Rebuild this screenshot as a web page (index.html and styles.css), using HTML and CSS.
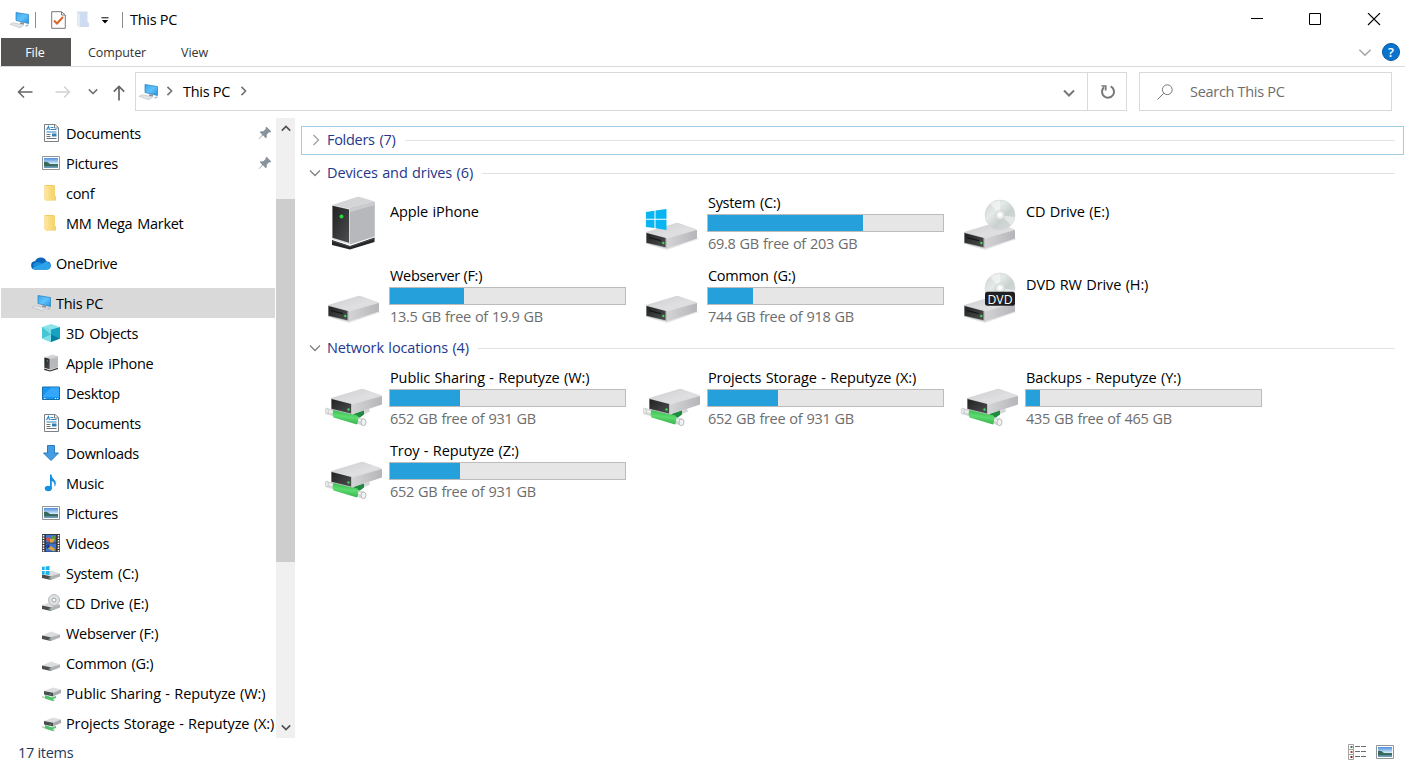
FILE: index.html
```html
<!DOCTYPE html>
<html lang="en">
<head>
<meta charset="utf-8">
<title>This PC</title>
<link rel="stylesheet" href="styles.css">
</head>
<body>
<svg class="defs" aria-hidden="true">
  <defs>
    <linearGradient id="gTop" x1="0" y1="0" x2="1" y2="1"><stop offset="0" stop-color="#cdcdcf"/><stop offset=".6" stop-color="#dfdfe1"/><stop offset="1" stop-color="#dadadc"/></linearGradient>
    <linearGradient id="gSide" x1="0" y1="0" x2="1" y2="0"><stop offset="0" stop-color="#d4d4d7"/><stop offset="1" stop-color="#b6b6ba"/></linearGradient>
    <linearGradient id="gDark" x1="0" y1="0" x2="1" y2="1"><stop offset="0" stop-color="#202222"/><stop offset="1" stop-color="#4c4e4f"/></linearGradient>
    <linearGradient id="gScreen" x1="0" y1="0" x2="1" y2="1"><stop offset="0" stop-color="#3aa5ec"/><stop offset=".5" stop-color="#5fc3fb"/><stop offset="1" stop-color="#2791dc"/></linearGradient>
    <linearGradient id="gDisc" x1="0" y1="0" x2="1" y2="1"><stop offset="0" stop-color="#cfd3d3"/><stop offset=".35" stop-color="#e3eae8"/><stop offset=".6" stop-color="#c9d1cf"/><stop offset="1" stop-color="#dadddd"/></linearGradient>
    <linearGradient id="gGreen" x1=".6" y1="0" x2=".4" y2="1"><stop offset="0" stop-color="#2fae46"/><stop offset=".5" stop-color="#5cdc6e"/><stop offset="1" stop-color="#2fa848"/></linearGradient>
    <linearGradient id="gSky" x1="0" y1="0" x2="0" y2="1"><stop offset="0" stop-color="#4f8fdc"/><stop offset=".55" stop-color="#cfe6f7"/><stop offset=".56" stop-color="#3c6c60"/><stop offset="1" stop-color="#6f9fc0"/></linearGradient>
    <linearGradient id="gFolder" x1="0" y1="0" x2="1" y2="0"><stop offset="0" stop-color="#fbdf8b"/><stop offset="1" stop-color="#f3d068"/></linearGradient>
  </defs>

  <symbol id="drive" viewBox="0 0 58 70">
    <path d="M6 56 24 61 56 50 50 48Z" fill="#d9d9d9" opacity=".6"/>
    <path d="M3 43 33 34Q34 33.700 35.500 34L53 40Q54.500 41 53 42L25 49.500Z" fill="url(#gTop)"/>
    <path d="M24 49.500 54 41V49.500L24 59.500Z" fill="url(#gSide)"/>
    <path d="M3 43 24 49V59.500L3 54.500Z" fill="#bfc0c2"/>
    <path d="M3.500 44 22.500 48.900V58.200L3.500 53.700Z" fill="url(#gDark)"/>
    <path d="M6 48 18 51V52.200L6 49.200Z" fill="#151717"/>
    <circle cx="20.300" cy="54" r="1.200" fill="#3fd45a"/>
  </symbol>

  <symbol id="disc" viewBox="0 0 58 70">
    <circle cx="39" cy="26" r="15" fill="url(#gDisc)" stroke="#d2d5d5" stroke-width=".6"/>
    <path d="M39 26 29 14.500Q34 11 39 11.500ZM39 26 50 36Q53 32 53.500 28Z" fill="#fff" opacity=".45"/>
    <circle cx="39" cy="26" r="4.500" fill="#e8ecec" stroke="#c7cbcb" stroke-width=".7"/>
    <circle cx="39" cy="26" r="2" fill="#fff"/>
  </symbol>

  <symbol id="netdrive" viewBox="0 0 58 70">
    <path d="M36 48 44 44.500 45 47.500 37 51Z" fill="#d3d6d6"/>
    <path d="M28 50 39 46V50.500L33 55Z" fill="#1f8a40"/>
    <path d="M2 44 39.500 55 37.500 61.500 1 50Z" fill="#d4d7d7"/>
    <path d="M2 45.500 39 56.500 38.500 58.500 1.500 47.500Z" fill="#f1f2f2"/>
    <ellipse cx="1.800" cy="47" rx="1.700" ry="3" fill="#e6e8e8" stroke="#bfc2c2" stroke-width=".6"/>
    <path d="M9 45 32.500 51.500Q34.500 54 32 60.500L8.500 53.500Q6.500 49 9 45Z" fill="url(#gGreen)"/>
    <ellipse cx="38.500" cy="58.300" rx="2.500" ry="3.400" fill="#f0f1f1" stroke="#a9adad" stroke-width=".8"/>
    <g transform="translate(3 -9)">
      <path d="M3 43 33 34Q34 33.700 35.500 34L53 40Q54.500 41 53 42L25 49.500Z" fill="url(#gTop)"/>
      <path d="M24 49.500 54 41V49.500L24 59.500Z" fill="url(#gSide)"/>
      <path d="M3 43 24 49V59.500L3 54.500Z" fill="#bfc0c2"/>
      <path d="M3.500 44 23 49V58.500L3.500 53.700Z" fill="url(#gDark)"/>
      <circle cx="20.500" cy="54.500" r="1.200" fill="#3fd45a"/>
    </g>
  </symbol>

  <symbol id="tower" viewBox="0 0 58 70">
    <path d="M7 51 25 57 49.500 48.500V53L25 60.500 7 56Z" fill="#252727"/>
    <path d="M7 52 25 57.700 49.500 49.500" fill="none" stroke="#4c4f50" stroke-width=".8"/>
    <path d="M7 16 31 8.300Q33 7.500 35 8L48 12Q51 13 49 14L26 20Z" fill="#d4d5d7"/>
    <path d="M25 19.500 49.800 13V47.500L25 55.500Z" fill="#b6b8bb"/>
    <path d="M25 19.500 49.800 13V16L25 23Z" fill="#cbcccf"/>
    <path d="M7 15.800 25 20V55.500L7 50Z" fill="#d9dadb"/>
    <path d="M7.500 16.800 24 20.600V53.700L7.500 48.700Z" fill="url(#gDark)"/>
    <circle cx="16.500" cy="27.500" r="2" fill="#28d73a"/>
  </symbol>

  <symbol id="pc" viewBox="0 0 20 18">
    <path d="M6 1.500 18.500 3.500V12.500L6 9.500Z" fill="url(#gScreen)" stroke="#277fbe" stroke-width=".7"/>
    <path d="M11 11 14 11.800V13.800L9.500 12.800Z" fill="#8c9499"/>
    <path d="M0 13.300 3.500 11.700 13.500 14.200 10 16.800Z" fill="#e3e6e8" stroke="#b5bbc0" stroke-width=".6"/>
    <path d="M15.500 15 18.500 14" stroke="#b5bbc0" stroke-width="1.500"/>
  </symbol>
  <symbol id="doc" viewBox="0 0 18 18">
    <path d="M2.500.5H13L16.500 3.500V17.500H2.500Z" fill="#fff" stroke="#7c8083"/>
    <path d="M12.500 .5V4H16" fill="none" stroke="#7c8083"/>
    <path d="M4.500 6 6.500 2.500 7.500 6M8.500 3.500H11.500M8.500 5.500H14.500M4.500 8H14.500" fill="none" stroke="#2b85c5" stroke-width="1.100"/>
    <path d="M4.500 10.500H8.500M4.500 12.500H8.500M4.500 14.500H14.500" stroke="#6b7277"/>
    <path d="M10 9.500H14.500V12.500H10Z" fill="#347fae"/>
  </symbol>
  <symbol id="pic" viewBox="0 0 18 18">
    <path d="M.5 2.500H17.500V15.500H.5Z" fill="#fff" stroke="#8f9496"/>
    <path d="M2 4H16V14H2Z" fill="url(#gSky)"/>
    <path d="M2 8Q5 7 8 10L16 11V12H2Z" fill="#39685d"/>
  </symbol>
  <symbol id="folder" viewBox="0 0 18 18">
    <path d="M2.500 1H10L13 1.500V12L14 12.500V16.500H5L2.500 15Z" fill="#efc95c"/>
    <path d="M2.500 1 6 2.500V14.500L5 17.500 2.500 15.500Z" fill="#fde299"/>
    <path d="M6 2H13V12L14 12.500V16H5.500L6 14Z" fill="url(#gFolder)"/>
  </symbol>
  <symbol id="cloud" viewBox="0 0 20 18">
    <path d="M4.500 15.500A4 4 0 0 1 4 7.300 6.200 6.200 0 0 1 15.500 7.500 4 4 0 0 1 16 15.500Z" fill="#0a64b8"/>
    <path d="M4 15.500 2 10.500Q6 6.500 10 9L16 13 15 15.500Z" fill="#178bd9"/>
    <path d="M4.500 15.500Q2.500 15.500 1.200 14L12.500 9Q15 6.800 17.500 8.400 20 10 19.700 12.500 19 15.500 16 15.500Z" fill="#2aa3e8"/>
  </symbol>
  <symbol id="cube" viewBox="0 0 18 18">
    <path d="M0 3 9 0 18 3 9 5.500Z" fill="#8ce3ea"/>
    <path d="M0 3 9 5.500V18L0 14.500Z" fill="#46c5d5"/>
    <path d="M18 3 9 5.500V18L18 14.500Z" fill="#17a2c2"/>
    <path d="M0 14.500 9 10.500V18ZM0 3 9 5.500 9 10.500Z" fill="#7de0e6"/>
    <path d="M9 10.500 18 14.500 9 18Z" fill="#087da3"/>
  </symbol>
  <symbol id="desk" viewBox="0 0 18 18">
    <path d="M.5 3H17.500V15.500H.5Z" fill="#1695f2" stroke="#176fa6"/>
    <path d="M9 3.500H17V13H1V12Z" fill="#32a7fb"/>
    <path d="M2 14.500H3.500M13 14.500H14M15 14.500H16" stroke="#e8f7ff"/>
  </symbol>
  <symbol id="down" viewBox="0 0 18 18">
    <path d="M5.500 1.500H12.500V9H16.500L9 16.500 1.500 9H5.500Z" fill="#479be3" stroke="#2b7bc0"/>
  </symbol>
  <symbol id="note" viewBox="0 0 18 18">
    <ellipse cx="6.300" cy="14.500" rx="3.500" ry="2.700" fill="#1590e0"/>
    <path d="M8 .5H9.500Q9.500 3.500 12 5.500 15.500 9 12.500 13 13 8 9.800 7V14.500H8Z" fill="#1590e0"/>
  </symbol>
  <symbol id="film" viewBox="0 0 18 18">
    <path d="M0 0H18V18H0Z" fill="#3a3a3e"/>
    <path d="M1.500 1V18M16.500 1V18" stroke="#fff" stroke-width="1.500" stroke-dasharray="1.500 1"/>
    <path d="M4 1H14V8.500H4ZM4 9.500H14V17.500H4Z" fill="#3c75d6"/>
    <path d="M4 4 8 3 9 7 5 8Z" fill="#d74d42"/><path d="M9 2 13 2.500 13 6 10 7Z" fill="#5b9b35"/>
    <path d="M8 5H13L11 8.500H8ZM5 14 9 12 13 15 12 17.500Z" fill="#e0a538"/>
    <path d="M4 11 7 10 8 13 5 15Z" fill="#223c8c"/>
  </symbol>
  <symbol id="sdrive" viewBox="0 0 18 18">
    <path d="M0 10.500 9 6.500 18 9.500 9 12Z" fill="#dcdddf"/>
    <path d="M9 12 18 9.500V12.500L9 16Z" fill="#afb1b4"/>
    <path d="M0 10.500 9 12.300V16L0 14Z" fill="#4a4c4e"/>
    <path d="M7.500 12.300 9 12.600V16L7.500 15.700Z" fill="#9a9c9e"/>
    <circle cx="7" cy="14" r=".6" fill="#50c060"/>
  </symbol>
  <symbol id="snet" viewBox="0 0 19 18">
    <path d="M0 12 13 16.500 12 17.500 0 13.500Z" fill="#b9c9bd"/>
    <path d="M3 11 12 14 11 17 3 14.500ZM10 13.500 14 12V14L11 15Z" fill="#4fc468"/>
    <path d="M2 7 11 3.500 19 5.500 11 8.700Z" fill="#dcdddf"/>
    <path d="M11 8.700 19 5.500V9L11 12.500Z" fill="#a9abae"/>
    <path d="M2 7 11 8.700V12.500L2 10.500Z" fill="#4a4c4e"/>
    <circle cx="8.500" cy="10.500" r=".6" fill="#50c060"/>
  </symbol>
  <symbol id="winlogo" viewBox="0 0 21 21">
    <path d="M0 3 8.800 1.800V9.800H0ZM9.800 1.600 21 0V9.800H9.800ZM0 10.800H8.800V19L0 18ZM9.800 10.800H21V21L9.800 19.200Z" fill="#08b5f0"/>
  </symbol>
  <symbol id="pin" viewBox="0 0 14 14">
    <path d="M8.500.7 13.300 5.500 12 6.500 11 6.300 8.700 8.700 8.800 11.300 7.800 12.200 4.900 9.300 1 13 .7 12.800 4.300 8.700 1.800 6.200 2.800 5.200 5.300 5.300 7.700 3 7.500 1.800Z" fill="#87929c"/>
  </symbol>
  <symbol id="chevR" viewBox="0 0 8 12"><path d="M1.500 1 6.500 6 1.500 11" fill="none" stroke="currentColor" stroke-width="var(--w,1.300)"/></symbol>
  <symbol id="chevD" viewBox="0 0 12 8"><path d="M1 1.500 6 6.500 11 1.500" fill="none" stroke="currentColor" stroke-width="var(--w,1.300)"/></symbol>
</svg>

<header class="titlebar">
  <svg class="t-pc" viewBox="0 0 20 18"><use href="#pc"/></svg>
  <i class="sep"></i>
  <svg class="t-check" viewBox="0 0 15 18"><path d="M.7.700H10.500L14.300 4V17.300H.7Z" fill="#fff" stroke="#777"/><path d="M10.500 1V4H14" fill="none" stroke="#777"/><path d="M3 9.500 6 12.500 12 6" fill="none" stroke="#df6228" stroke-width="2"/></svg>
  <svg class="t-folder" viewBox="0 0 12 17"><path d="M0 .5H10.500V11L12 12V16H3L0 14Z" fill="#cddcf0"/><path d="M0 1 3 3V17L0 14.500Z" fill="#e3ebf6"/></svg>
  <svg class="t-more" viewBox="0 0 8 7"><path d="M.5.800H7.500" stroke="#000"/><path d="M.8 3H7.200L4 6.500Z"/></svg>
  <i class="sep s2"></i>
  <h1 class="title">This PC</h1>
  <div class="winctl">
    <svg viewBox="0 0 14 14"><path d="M1 5.500H13" stroke="#000"/></svg>
    <svg viewBox="0 0 14 14"><path d="M1.500 .5H12.500V11.500H1.500Z" fill="none" stroke="#000"/></svg>
    <svg viewBox="0 0 14 14"><path d="M1 0 13 12M13 0 1 12" stroke="#000" stroke-width="1.100"/></svg>
  </div>
</header>

<nav class="tabs">
  <span class="tab file">File</span><span class="tab computer">Computer</span><span class="tab view">View</span>
  <div class="tabs-right">
    <svg class="exp" viewBox="0 0 12 8"><use href="#chevD"/></svg>
    <span class="help">?</span>
  </div>
</nav>

<div class="toolbar">
  <div class="nav">
    <svg class="n-back" viewBox="0 0 16 14"><path d="M15.500 7H1.500M7 1.500 1.500 7 7 12.500" fill="none" stroke="#666" stroke-width="1.500"/></svg>
    <svg class="n-fwd" viewBox="0 0 16 14"><path d="M.5 7H14.500M9 1.500 14.500 7 9 12.500" fill="none" stroke="#d2d2d2" stroke-width="1.400"/></svg>
    <svg class="n-hist" viewBox="0 0 12 8"><use href="#chevD"/></svg>
    <svg class="n-up" viewBox="0 0 12 16"><path d="M6 15.500V1.500M.8 6.700 6 1.500 11.200 6.700" fill="none" stroke="#666" stroke-width="1.700"/></svg>
  </div>
  <div class="address">
    <svg class="a-pc" viewBox="0 0 20 18"><use href="#pc"/></svg>
    <svg class="a-c1" viewBox="0 0 8 12"><use href="#chevR"/></svg>
    <span class="crumb">This PC</span>
    <svg class="a-c2" viewBox="0 0 8 12"><use href="#chevR"/></svg>
    <svg class="a-drop" viewBox="0 0 12 8"><use href="#chevD"/></svg>
    <div class="refresh"><svg viewBox="0 0 16 16"><path d="M10.700 2.300A6 6 0 1 1 4 3.200" fill="none" stroke="#777" stroke-width="2"/><path d="M1.500 2H5.700V6.500" fill="none" stroke="#777" stroke-width="1.700"/></svg></div>
  </div>
  <div class="search">
    <svg viewBox="0 0 16 16"><circle cx="10.300" cy="5.700" r="4.900" fill="none" stroke="#777"/><path d="M6.800 9.200.5 15.500" stroke="#777"/></svg>
    <span>Search This PC</span>
  </div>
</div>

<main class="body">
  <aside class="tree">
    <div class="row"><svg><use href="#doc"/></svg><span>Documents</span><svg class="pin"><use href="#pin"/></svg></div>
    <div class="row"><svg><use href="#pic"/></svg><span>Pictures</span><svg class="pin"><use href="#pin"/></svg></div>
    <div class="row"><svg><use href="#folder"/></svg><span>conf</span></div>
    <div class="row"><svg><use href="#folder"/></svg><span>MM Mega Market</span></div>
    <div class="row root"><svg><use href="#cloud"/></svg><span>OneDrive</span></div>
    <div class="row root selected"><svg><use href="#pc"/></svg><span class="snug">This PC</span></div>
    <div class="row"><svg><use href="#cube"/></svg><span>3D Objects</span></div>
    <div class="row"><svg viewBox="3 6 50 56"><use href="#tower" width="58" height="70"/></svg><span>Apple iPhone</span></div>
    <div class="row"><svg><use href="#desk"/></svg><span>Desktop</span></div>
    <div class="row"><svg><use href="#doc"/></svg><span>Documents</span></div>
    <div class="row"><svg><use href="#down"/></svg><span>Downloads</span></div>
    <div class="row"><svg><use href="#note"/></svg><span>Music</span></div>
    <div class="row"><svg><use href="#pic"/></svg><span>Pictures</span></div>
    <div class="row"><svg><use href="#film"/></svg><span>Videos</span></div>
    <div class="row"><svg viewBox="0 0 18 18"><use href="#sdrive" width="18" height="18"/><path d="M-1 3 2.700 2.500V6H-1ZM3.600 2.400 7.500 2V6H3.600ZM-1 7H2.700V10.500L-1 10ZM3.600 7H7.500V11L3.600 10.600Z" fill="#1ab2ea"/></svg><span>System (C:)</span></div>
    <div class="row"><svg viewBox="0 0 18 18"><use href="#sdrive" y="1" width="18" height="18"/><circle cx="12" cy="6" r="5.500" fill="#dfe2e2" stroke="#a9acae" stroke-width=".8"/><circle cx="12" cy="6" r="2" fill="#fff" stroke="#a0a3a5"/></svg><span>CD Drive (E:)</span></div>
    <div class="row"><svg viewBox="0 0 18 18"><use href="#sdrive" y="1" width="18" height="18"/></svg><span class="snug">Webserver (F:)</span></div>
    <div class="row"><svg viewBox="0 0 18 18"><use href="#sdrive" y="1" width="18" height="18"/></svg><span>Common (G:)</span></div>
    <div class="row wide"><svg><use href="#snet"/></svg><span class="long">Public Sharing - Reputyze (W:)</span></div>
    <div class="row wide"><svg><use href="#snet"/></svg><span class="long">Projects Storage - Reputyze (X:)</span></div>
  </aside>
  <div class="scrollbar">
    <svg viewBox="0 0 12 8"><path d="M1 6.500 6 1.500 11 6.500" fill="none" stroke="#505050" stroke-width="2"/></svg>
    <div class="track"><div class="thumb"></div></div>
    <svg viewBox="0 0 12 8"><path d="M1 1.500 6 6.500 11 1.500" fill="none" stroke="#505050" stroke-width="2"/></svg>
  </div>

  <div class="content">
    <h2 class="group focused"><svg class="g-r" viewBox="0 0 8 12"><use href="#chevR"/></svg><span>Folders (7)</span></h2>
    <h2 class="group devices"><svg class="g-d" viewBox="0 0 12 8"><use href="#chevD"/></svg><span class="long">Devices and drives (6)</span></h2>
    <section class="grid">
      <article class="item plain"><svg class="big"><use href="#tower"/></svg><div class="info"><p class="long">Apple iPhone</p></div></article>
      <article class="item"><svg class="big" viewBox="0 0 58 70"><use href="#drive"/><use href="#winlogo" x="2.700" y="20" width="21" height="21"/></svg><div class="info"><p>System (C:)</p><div class="bar"><b style="width:155px"></b></div><small>69.8 GB free of 203 GB</small></div></article>
      <article class="item plain"><svg class="big" viewBox="0 0 58 70"><use href="#drive"/><use href="#disc"/></svg><div class="info"><p class="long">CD Drive (E:)</p></div></article>
      <article class="item"><svg class="big"><use href="#drive"/></svg><div class="info"><p class="snug">Webserver (F:)</p><div class="bar"><b style="width:74px"></b></div><small>13.5 GB free of 19.9 GB</small></div></article>
      <article class="item"><svg class="big"><use href="#drive"/></svg><div class="info"><p>Common (G:)</p><div class="bar"><b style="width:45px"></b></div><small>744 GB free of 918 GB</small></div></article>
      <article class="item plain"><svg class="big" viewBox="0 0 58 70"><use href="#drive"/><use href="#disc"/><rect x="24" y="29.800" width="30" height="14" rx="2.500" fill="#1e1f20"/><text class="dvd" x="39" y="41.500" text-anchor="middle" textLength="25" lengthAdjust="spacingAndGlyphs">DVD</text></svg><div class="info"><p class="long">DVD RW Drive (H:)</p></div></article>
    </section>
    <h2 class="group network"><svg class="g-d" viewBox="0 0 12 8"><use href="#chevD"/></svg><span class="long">Network locations (4)</span></h2>
    <section class="grid">
      <article class="item"><svg class="big"><use href="#netdrive"/></svg><div class="info"><p class="long">Public Sharing - Reputyze (W:)</p><div class="bar"><b style="width:70px"></b></div><small>652 GB free of 931 GB</small></div></article>
      <article class="item"><svg class="big"><use href="#netdrive"/></svg><div class="info"><p class="long">Projects Storage - Reputyze (X:)</p><div class="bar"><b style="width:70px"></b></div><small>652 GB free of 931 GB</small></div></article>
      <article class="item"><svg class="big"><use href="#netdrive"/></svg><div class="info"><p class="long">Backups - Reputyze (Y:)</p><div class="bar"><b style="width:14px"></b></div><small>435 GB free of 465 GB</small></div></article>
      <article class="item"><svg class="big"><use href="#netdrive"/></svg><div class="info"><p class="long">Troy - Reputyze (Z:)</p><div class="bar"><b style="width:70px"></b></div><small>652 GB free of 931 GB</small></div></article>
    </section>
  </div>
</main>

<footer class="status">
  <span>17 items</span>
  <div class="views">
    <svg class="v-list" viewBox="0 0 18 16"><path d="M.5.500H5.500V15.500H.5ZM.5 5.500H5.500M.5 10.500H5.500" fill="#fff" stroke="#a5a09c"/><path d="M2.500 3H4.500" stroke="#3e6a56" stroke-width="2"/><path d="M2.500 8H4.500" stroke="#a04c2c" stroke-width="2"/><path d="M2.500 13H4.500" stroke="#8c2420" stroke-width="2"/><path d="M7 2.500H12M13 2.500H18M7 7.500H12M13 7.500H18M7 12.500H12M13 12.500H18" stroke="#6c6c6c"/></svg>
    <svg class="v-pic" viewBox="0 0 18 18"><use href="#pic"/></svg>
  </div>
</footer>
</body>
</html>
```
FILE: styles.css
```css
* { box-sizing: border-box; margin: 0; padding: 0; }
body {
  display: flex; flex-direction: column; width: 1405px; height: 768px; overflow: hidden;
  background: #fff; color: #000; font: 14.5px/20px "Open Sans", "Noto Sans", sans-serif; letter-spacing: -.3px;
}
svg { display: block; flex: none; }
.defs { position: absolute; width: 0; height: 0; }

.titlebar { display: flex; align-items: center; height: 38px; padding: 1px 0 0 10px; }
.t-pc { width: 20px; height: 18px; }
.sep { width: 1px; height: 16px; margin-left: 5px; background: #8c8c8c; }
.t-check { width: 15px; height: 18px; margin-left: 15px; }
.t-folder { width: 12px; height: 17px; margin-left: 11px; }
.t-more { width: 8px; height: 7px; margin: 2px 0 0 12px; }
.sep.s2 { margin-left: 13px; }
.title { font: inherit; margin: 1px 0 0 7px; }
.winctl { display: flex; gap: 44px; margin: 0 24px 0 auto; }
.winctl svg { width: 14px; height: 14px; }
.winctl svg + svg + svg { margin-left: 1px; }

.tabs { display: flex; height: 29px; padding-left: 1px; border-bottom: 1px solid #dadada; font-size: 12.5px; line-height: 30px; color: #333; letter-spacing: -.05px; }
.tab.file { width: 70px; height: 28px; padding-right: 2px; background: #565452; color: #fff; text-align: center; }
.tab.computer { margin-left: 17px; width: 58px; letter-spacing: -.1px; }
.tab.view { margin-left: 35px; }
.tabs-right { display: flex; align-items: center; gap: 10px; margin: 0 5px 0 auto; }
.exp { width: 14px; height: 9px; color: #a5a5a5; }
.help { width: 18px; height: 18px; border-radius: 50%; background: #0a73cf; border: 1px solid #065aa8; color: #fff; font-size: 13px; line-height: 16px; font-weight: 600; text-align: center; }

.toolbar { display: flex; align-items: center; height: 51px; padding-bottom: 2px; }
.nav { display: flex; align-items: center; width: 135px; padding-left: 17px; color: #777; --w: 2; }
.n-back { width: 16px; height: 14px; }
.n-fwd { width: 16px; height: 14px; margin-left: 22px; }
.n-hist { width: 10px; height: 7px; margin-left: 17px; }
.n-up { width: 12px; height: 16px; margin: 2px 0 0 15px; }
.address { display: flex; align-items: center; width: 992px; height: 39px; border: 1px solid #d9d9d9; color: #777; --w: 2; }
.a-pc { width: 20px; height: 18px; margin-left: 3px; }
.a-c1, .a-c2 { width: 7px; height: 10px; }
.a-c1 { margin: 0 0 2px 7px; }
.crumb { margin-left: 10px; color: #000; width: 47px; white-space: nowrap; }
.a-c2 { margin: 0 0 2px 10px; }
.a-drop { width: 12px; height: 8px; margin: 2px 12px 0 auto; }
.refresh { display: flex; align-items: center; justify-content: center; width: 39px; height: 37px; padding-left: 2px; border-left: 1px solid #d9d9d9; }
.refresh svg { width: 16px; height: 16px; }
.search { display: flex; align-items: center; width: 253px; height: 39px; margin-left: 12px; padding-left: 17px; border: 1px solid #d9d9d9; color: #6d6d6d; }
.search svg { width: 16px; height: 16px; margin-right: 17px; }

.body { display: flex; height: 620px; word-spacing: 1.500px; }
.snug { word-spacing: 0; }
.long { letter-spacing: -.12px; word-spacing: .8px; }
.tree { width: 275px; padding-left: 1px; overflow: hidden; }
.row { display: flex; align-items: center; height: 30px; padding-left: 41px; white-space: nowrap; }
.row > span { padding-top: 2px; }
.row > svg { width: 18px; height: 18px; margin-right: 6px; }
.row > svg.pin { width: 14px; height: 14px; margin: 0 3px 0 auto; }
.row.wide > svg { width: 19px; margin-right: 5px; }
.row.root { margin-top: 10px; padding-left: 30px; }
.row.root > svg { width: 20px; margin-right: 5px; }
.row.selected { padding-left: 31px; background: #d9d9d9; }
.row.selected > svg { margin-right: 4px; }
.scrollbar { display: flex; flex-direction: column; align-items: center; width: 19px; margin-left: 1px; padding: 7px 0; background: #f0f0f0; }
.scrollbar svg { width: 10px; height: 7px; }
.track { flex: 1; width: 19px; padding-top: 67px; }
.thumb { height: 363px; background: #cdcdcd; }

.content { flex: 1; padding: 8px 1px 0 6px; }
.group { display: flex; align-items: center; font: inherit; color: #26378b; }
.group::after { content: ""; flex: 1; height: 1px; margin-left: 9px; background: #e2e2e2; }
.focused { height: 29px; padding: 0 8px 1px 10px; border: 1px solid #a3cde6; }
.focused span { padding-bottom: 1px; }
.g-r { width: 8px; height: 12px; margin-right: 7px; color: #a0a0a0; }
.g-d { width: 12px; height: 8px; margin-right: 6px; color: #808080; }
.devices { height: 34px; padding: 2px 9px 0 8px; }
.network { height: 29px; padding: 0 9px 3px 8px; }
.grid { display: grid; grid-template-columns: repeat(3, 318px); grid-auto-rows: 73px; padding-left: 24px; }
.item { display: flex; }
.big { width: 58px; height: 70px; }
.info { display: flex; flex-direction: column; width: 237px; margin-left: 6px; padding-top: 4px; }
.info p, .info small { padding-left: 1px; white-space: nowrap; }
.plain .info { padding-top: 13px; }
.bar { height: 18px; margin-top: 1px; border: 1px solid #bcbcbc; background: #e6e6e6; }
.bar b { display: block; height: 16px; background: #26a0da; }
.info small { margin-top: 2px; font-size: inherit; color: #6d6d6d; word-spacing: .6px; }
.dvd { font-size: 12px; fill: #fff; letter-spacing: 0; word-spacing: 0; }

.status { display: flex; align-items: center; height: 30px; padding: 0 11px 2px 18px; color: #1e395b; }
.status span { padding-top: 2px; }
.views { display: flex; align-items: center; gap: 10px; margin-left: auto; }
.v-list { width: 18px; height: 16px; }
.v-pic { width: 18px; height: 18px; }
```
